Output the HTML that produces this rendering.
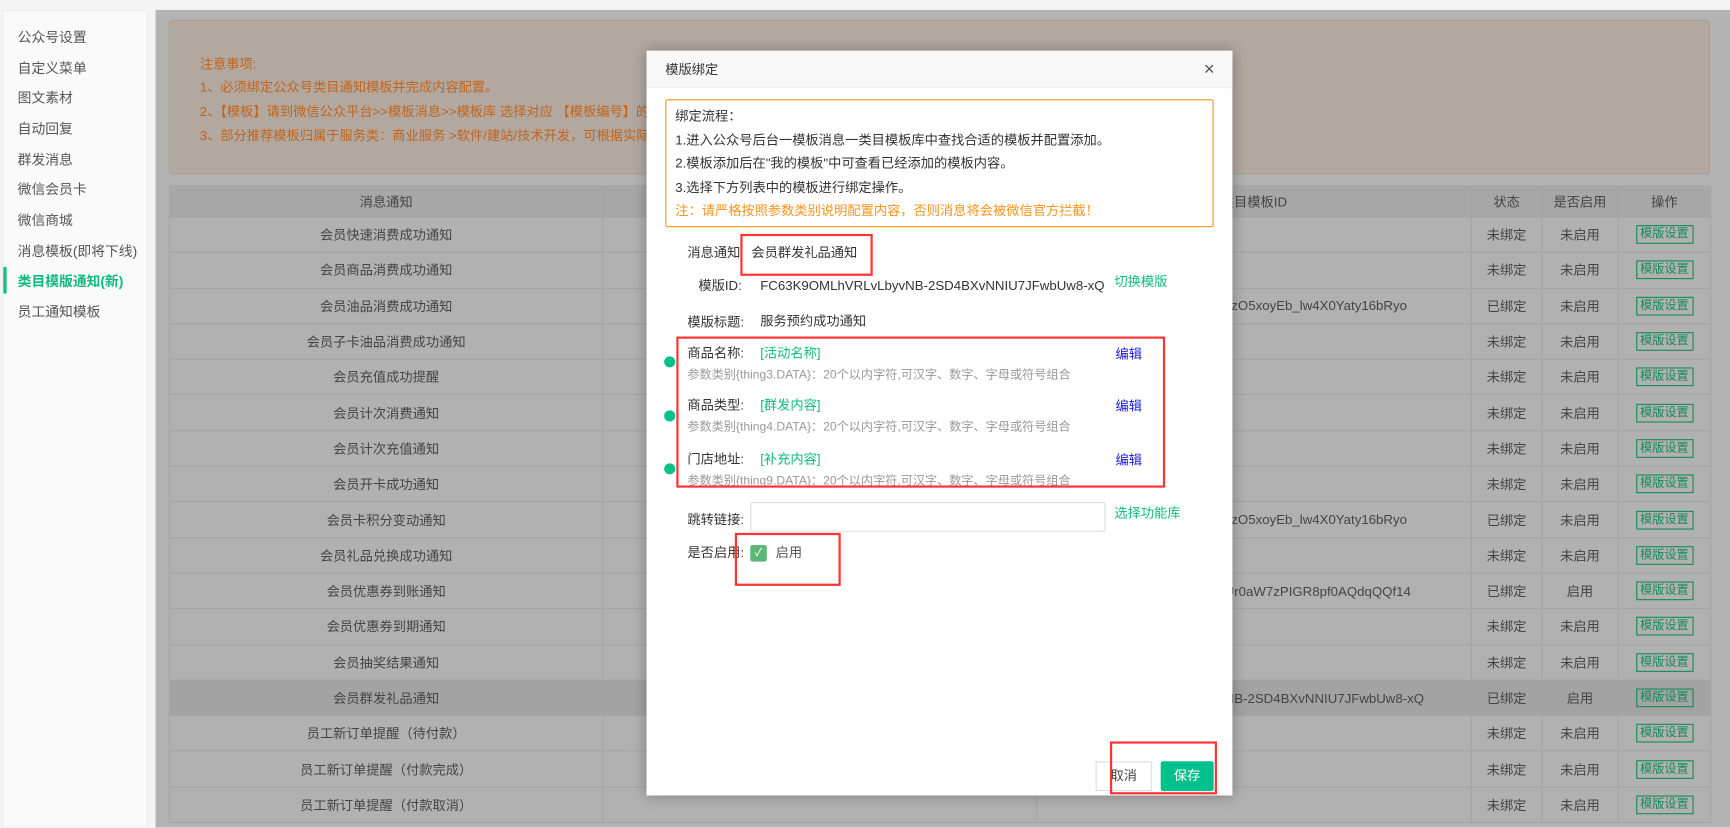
<!DOCTYPE html><html><head><meta charset="utf-8"><style>
*{margin:0;padding:0;box-sizing:border-box}
html,body{width:1730px;height:828px;overflow:hidden;background:#f4f4f4}
body{font-family:"Liberation Sans","Noto Sans CJK SC",sans-serif;font-size:12px;color:#333}
.w{position:absolute;left:0;top:0;width:1568px;height:750px;transform:scale(1.10332);transform-origin:0 0}
.a{position:absolute;white-space:nowrap;line-height:14px}
.side{position:absolute;left:2px;top:9px;width:132px;height:741px;background:#fafafa;border:1px solid #ececec}
.side div{position:absolute;left:13px;font-size:12.5px;color:#555;line-height:15px}
.main{position:absolute;left:141px;top:9px;width:1427px;height:741px;background:#b3b3b3}
.note{position:absolute;left:153px;top:18px;width:1397px;height:140px;background:#b3a89f;border:1px solid #ab9f93;border-radius:3px}
.note div{position:absolute;left:27px;color:#c2641c;font-size:12px;line-height:14px}
table{position:absolute;left:153px;top:168px;width:1397px;border-collapse:collapse;table-layout:fixed}
td,th{border:1px solid #a4a4a4;height:32.3px;text-align:center;font-weight:normal;color:#444;font-size:12px;background:#b1b1b1}
th{background:#a7a7a7;height:28px}
tr.hl td{background:#a3a3a3}
.btn{display:inline-block;border:1px solid #168a5e;color:#168a5e;padding:0 3px;font-size:11px;line-height:15px}
.modal{position:absolute;left:586px;top:46px;width:531px;height:675px;background:#fff;box-shadow:0 0 12px rgba(0,0,0,.3)}
.mh{position:absolute;left:0;top:0;width:531px;height:34px;background:#f8f8f8;border-bottom:1px solid #eee}
.ob{position:absolute;left:17px;top:44px;width:497px;height:116px;border:1px solid #f7941d;border-radius:2px}
.ob div{position:absolute;left:8px;font-size:12px;color:#333;line-height:14px}
.rb{position:absolute;border:2px solid #f33}
.g{color:#10b981}
.lbl{font-size:12px;color:#333}
.desc{color:#999;font-size:11px}
.dot{position:absolute;width:10px;height:10px;border-radius:50%;background:#00c08b}
.ed{color:#2020e0}
</style></head><body><div class="w">
<div class="side">
<div style="top:17px">公众号设置</div><div style="top:45px">自定义菜单</div><div style="top:72px">图文素材</div><div style="top:100px">自动回复</div><div style="top:128px">群发消息</div><div style="top:155px">微信会员卡</div><div style="top:183px">微信商城</div><div style="top:211px">消息模板(即将下线)</div>
<div style="top:238px;color:#10b981;font-weight:bold">类目模版通知(新)</div>
<span style="position:absolute;left:0;top:232px;width:3px;height:24px;background:#10c08a"></span>
<div style="top:266px">员工通知模板</div>
</div>
<div class="main"></div>
<div class="note">
<div style="top:32px">注意事项:</div>
<div style="top:53px">1、必须绑定公众号类目通知模板并完成内容配置。</div>
<div style="top:75px">2、【模板】请到微信公众平台&gt;&gt;模板消息&gt;&gt;模板库 选择对应 【模板编号】的模板</div>
<div style="top:97px">3、部分推荐模板归属于服务类：商业服务 &gt;软件/建站/技术开发，可根据实际类目选择</div>
</div>
<table>
<colgroup><col style="width:393px"><col style="width:393px"><col style="width:394px"><col style="width:64px"><col style="width:69px"><col style="width:84px"></colgroup>
<tr><th>消息通知</th><th></th><th>类目模板ID</th><th>状态</th><th>是否启用</th><th>操作</th></tr>
<tr><td>会员快速消费成功通知</td><td></td><td></td><td>未绑定</td><td>未启用</td><td><span class="btn">模版设置</span></td></tr>
<tr><td>会员商品消费成功通知</td><td></td><td></td><td>未绑定</td><td>未启用</td><td><span class="btn">模版设置</span></td></tr>
<tr><td>会员油品消费成功通知</td><td></td><td style="text-align:left;padding-left:170px">vzO5xoyEb_lw4X0Yaty16bRyo</td><td>已绑定</td><td>未启用</td><td><span class="btn">模版设置</span></td></tr>
<tr><td>会员子卡油品消费成功通知</td><td></td><td></td><td>未绑定</td><td>未启用</td><td><span class="btn">模版设置</span></td></tr>
<tr><td>会员充值成功提醒</td><td></td><td></td><td>未绑定</td><td>未启用</td><td><span class="btn">模版设置</span></td></tr>
<tr><td>会员计次消费通知</td><td></td><td></td><td>未绑定</td><td>未启用</td><td><span class="btn">模版设置</span></td></tr>
<tr><td>会员计次充值通知</td><td></td><td></td><td>未绑定</td><td>未启用</td><td><span class="btn">模版设置</span></td></tr>
<tr><td>会员开卡成功通知</td><td></td><td></td><td>未绑定</td><td>未启用</td><td><span class="btn">模版设置</span></td></tr>
<tr><td>会员卡积分变动通知</td><td></td><td style="text-align:left;padding-left:170px">vzO5xoyEb_lw4X0Yaty16bRyo</td><td>已绑定</td><td>未启用</td><td><span class="btn">模版设置</span></td></tr>
<tr><td>会员礼品兑换成功通知</td><td></td><td></td><td>未绑定</td><td>未启用</td><td><span class="btn">模版设置</span></td></tr>
<tr><td>会员优惠券到账通知</td><td></td><td style="text-align:left;padding-left:170px">Ur0aW7zPIGR8pf0AQdqQQf14</td><td>已绑定</td><td>启用</td><td><span class="btn">模版设置</span></td></tr>
<tr><td>会员优惠券到期通知</td><td></td><td></td><td>未绑定</td><td>未启用</td><td><span class="btn">模版设置</span></td></tr>
<tr><td>会员抽奖结果通知</td><td></td><td></td><td>未绑定</td><td>未启用</td><td><span class="btn">模版设置</span></td></tr>
<tr class="hl"><td>会员群发礼品通知</td><td></td><td style="text-align:left;padding-left:170px">NB-2SD4BXvNNIU7JFwbUw8-xQ</td><td>已绑定</td><td>启用</td><td><span class="btn">模版设置</span></td></tr>
<tr><td>员工新订单提醒（待付款）</td><td></td><td></td><td>未绑定</td><td>未启用</td><td><span class="btn">模版设置</span></td></tr>
<tr><td>员工新订单提醒（付款完成）</td><td></td><td></td><td>未绑定</td><td>未启用</td><td><span class="btn">模版设置</span></td></tr>
<tr><td>员工新订单提醒（付款取消）</td><td></td><td></td><td>未绑定</td><td>未启用</td><td><span class="btn">模版设置</span></td></tr>
</table>
<div class="modal">
<div class="mh"><span class="a" style="left:17px;top:10px;font-size:12px">模版绑定</span><span class="a" style="left:505px;top:8px;font-size:17px;line-height:17px;color:#555">×</span></div>
<div class="ob">
<div style="top:7px">绑定流程：</div>
<div style="top:29px">1.进入公众号后台一模板消息一类目模板库中查找合适的模板并配置添加。</div>
<div style="top:50px">2.模板添加后在"我的模板"中可查看已经添加的模板内容。</div>
<div style="top:72px">3.选择下方列表中的模板进行绑定操作。</div>
<div style="top:93px;color:#f7941d">注：请严格按照参数类别说明配置内容，否则消息将会被微信官方拦截！</div>
</div>
<span class="a lbl" style="left:37px;top:176px">消息通知</span>
<span class="a lbl" style="left:95px;top:176px">会员群发礼品通知</span>
<div class="rb" style="left:85px;top:166px;width:120px;height:38px"></div>
<span class="a lbl" style="left:47px;top:206px">模版ID:</span>
<span class="a lbl" style="left:103px;top:206px">FC63K9OMLhVRLvLbyvNB-2SD4BXvNNIU7JFwbUw8-xQ</span>
<span class="a g" style="left:424px;top:202px">切换模版</span>
<span class="a lbl" style="left:37px;top:239px">模版标题:</span>
<span class="a lbl" style="left:103px;top:238px">服务预约成功通知</span>
<div class="rb" style="left:27px;top:259px;width:443px;height:137px"></div>
<span class="dot" style="left:16px;top:277px"></span><span class="dot" style="left:16px;top:326px"></span><span class="dot" style="left:16px;top:374px"></span>
<span class="a lbl" style="left:37px;top:267px">商品名称:</span><span class="a g" style="left:103px;top:267px">[活动名称]</span><span class="a ed" style="left:425px;top:268px">编辑</span>
<span class="a desc" style="left:37px;top:287px">参数类别{thing3.DATA}：20个以内字符,可汉字、数字、字母或符号组合</span>
<span class="a lbl" style="left:37px;top:314px">商品类型:</span><span class="a g" style="left:103px;top:314px">[群发内容]</span><span class="a ed" style="left:425px;top:315px">编辑</span>
<span class="a desc" style="left:37px;top:334px">参数类别{thing4.DATA}：20个以内字符,可汉字、数字、字母或符号组合</span>
<span class="a lbl" style="left:37px;top:363px">门店地址:</span><span class="a g" style="left:103px;top:363px">[补充内容]</span><span class="a ed" style="left:425px;top:364px">编辑</span>
<span class="a desc" style="left:37px;top:383px;height:11px;overflow:hidden">参数类别{thing9.DATA}：20个以内字符,可汉字、数字、字母或符号组合</span>
<span class="a lbl" style="left:37px;top:418px">跳转链接:</span>
<div class="a" style="left:94px;top:409px;width:322px;height:27px;border:1px solid #ddd;border-radius:2px"></div>
<span class="a g" style="left:424px;top:412px">选择功能库</span>
<span class="a lbl" style="left:37px;top:448px">是否启用:</span>
<span class="a" style="left:94px;top:448px;width:15px;height:15px;background:#5cb878;border-radius:2px;color:#fff;font-size:10px;line-height:15px;text-align:center">✓</span>
<span class="a" style="left:117px;top:448px;color:#555">启用</span>
<div class="rb" style="left:80px;top:437px;width:96px;height:48px"></div>
<div class="a" style="left:407px;top:644px;width:51px;height:27px;border:1px solid #ddd;text-align:center;line-height:25px;color:#444">取消</div>
<div class="a" style="left:466px;top:644px;width:48px;height:27px;background:#00c08b;color:#fff;text-align:center;line-height:27px;border-radius:2px">保存</div>
<div class="rb" style="left:420px;top:626px;width:97px;height:48px"></div>
</div>
</div></body></html>
